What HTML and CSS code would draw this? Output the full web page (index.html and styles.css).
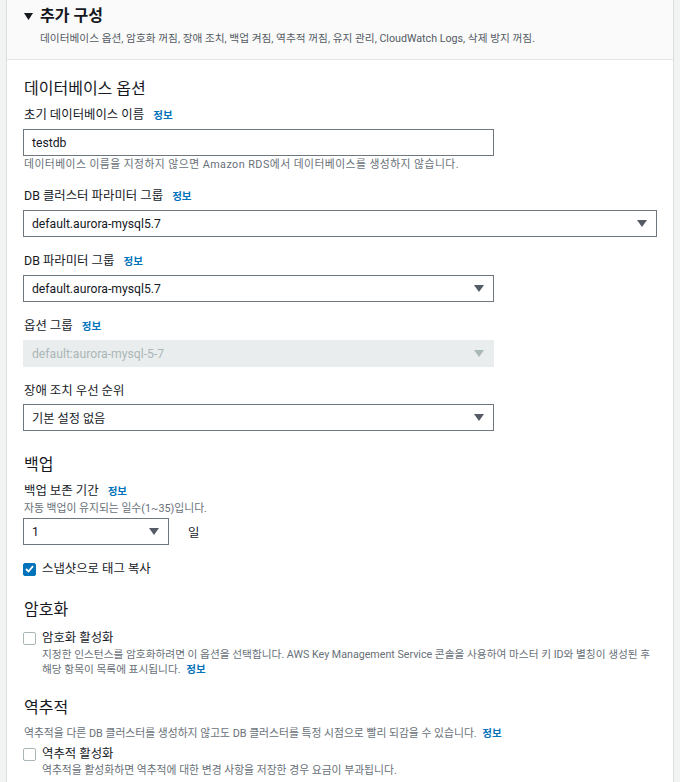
FILE: index.html
```html
<!DOCTYPE html>
<html lang="ko">
<head>
<meta charset="utf-8">
<title>추가 구성</title>
<link rel="stylesheet" href="styles.css">
</head>
<body>
<div class="panel">
  <div class="panel-header">
    <div class="title-row">
      <svg class="caret-down" width="9" height="7" viewBox="0 0 9 7"><path d="M0 0h9L4.5 7z" fill="#16191f"/></svg>
      <span class="title">추가 구성</span>
    </div>
    <div class="summary">데이터베이스 옵션, 암호화 꺼짐, 장애 조치, 백업 켜짐, 역추적 꺼짐, 유지 관리, CloudWatch Logs, 삭제 방지 꺼짐.</div>
  </div>
  <div class="panel-body">
    <h3 class="section-title first">데이터베이스 옵션</h3>

    <div class="field">
      <div class="label">초기 데이터베이스 이름 <a class="info">정보</a></div>
      <div class="control input">testdb</div>
      <div class="hint wide-hint">데이터베이스 이름을 지정하지 않으면 Amazon RDS에서 데이터베이스를 생성하지 않습니다.</div>
    </div>

    <div class="field">
      <div class="label">DB 클러스터 파라미터 그룹 <a class="info">정보</a></div>
      <div class="control select wide"><span>default.aurora-mysql5.7</span><svg class="arrow" width="10" height="7" viewBox="0 0 10 7"><path d="M0 0h10L5 7z"/></svg></div>
    </div>

    <div class="field">
      <div class="label">DB 파라미터 그룹 <a class="info">정보</a></div>
      <div class="control select"><span>default.aurora-mysql5.7</span><svg class="arrow" width="10" height="7" viewBox="0 0 10 7"><path d="M0 0h10L5 7z"/></svg></div>
    </div>

    <div class="field">
      <div class="label">옵션 그룹 <a class="info">정보</a></div>
      <div class="control select disabled"><span>default:aurora-mysql-5-7</span><svg class="arrow" width="10" height="7" viewBox="0 0 10 7"><path d="M0 0h10L5 7z"/></svg></div>
    </div>

    <div class="field">
      <div class="label">장애 조치 우선 순위</div>
      <div class="control select"><span>기본 설정 없음</span><svg class="arrow" width="10" height="7" viewBox="0 0 10 7"><path d="M0 0h10L5 7z"/></svg></div>
    </div>

    <h3 class="section-title backup">백업</h3>
    <div class="field">
      <div class="label">백업 보존 기간 <a class="info">정보</a></div>
      <div class="hint tight">자동 백업이 유지되는 일수(1~35)입니다.</div>
      <div class="retention">
        <div class="control select small"><span>1</span><svg class="arrow" width="10" height="7" viewBox="0 0 10 7"><path d="M0 0h10L5 7z"/></svg></div>
        <span class="unit">일</span>
      </div>
    </div>
    <div class="check-row copy-tags">
      <span class="box checked"><svg width="9" height="8" viewBox="0 0 9 8"><path d="M1 4l2.5 2.5L8 1.2" fill="none" stroke="#fff" stroke-width="1.8"/></svg></span>
      <span class="check-label">스냅샷으로 태그 복사</span>
    </div>

    <h3 class="section-title encryption">암호화</h3>
    <div class="check-row enc-row">
      <span class="box"></span>
      <span class="check-label">암호화 활성화</span>
    </div>
    <div class="check-hint enc-hint">지정한 인스턴스를 암호화하려면 이 옵션을 선택합니다. AWS Key Management Service 콘솔을 사용하여 마스터 키 ID와 별칭이 생성된 후<br>해당 항목이 목록에 표시됩니다. <a class="info">정보</a></div>

    <h3 class="section-title">역추적</h3>
    <div class="hint section-hint">역추적을 다른 DB 클러스터를 생성하지 않고도 DB 클러스터를 특정 시점으로 빨리 되감을 수 있습니다. <a class="info">정보</a></div>
    <div class="check-row bt-row">
      <span class="box"></span>
      <span class="check-label">역추적 활성화</span>
    </div>
    <div class="check-hint">역추적을 활성화하면 역추적에 대한 변경 사항을 저장한 경우 요금이 부과됩니다.</div>
  </div>
</div>
</body>
</html>
```

FILE: styles.css
```css
* { box-sizing: border-box; }
html, body { margin: 0; padding: 0; }
body {
  background: #f2f3f3;
  font-family: "Roboto", "Noto Sans CJK KR", sans-serif;
  color: #16191f;
  height: 782px;
  overflow: hidden;
}
.panel {
  margin-left: 6px;
  width: 668px;
  border-left: 1px solid #dcdfe0;
  border-right: 1px solid #dcdfe0;
  background: #fff;
  min-height: 782px;
}
.panel-header {
  background: #fafafa;
  border-bottom: 1px solid #e4e7e8;
  padding: 5px 20px 18px 17px;
  height: 60px;
}
.title-row {
  display: flex;
  align-items: center;
  height: 22px;
  gap: 7px;
}
.caret-down { margin-top: 1px; }
.title {
  font-size: 16px;
  font-weight: 700;
  line-height: 22px;
}
.summary {
  margin-top: 5px;
  margin-left: 16px;
  font-size: 10.7px;
  line-height: 14px;
  color: #545b64;
  white-space: nowrap;
}
.panel-body {
  padding: 0 16px;
}
.section-title {
  margin: 21px 0 7px 1px;
  font-size: 16px;
  font-weight: 400;
  line-height: 20px;
}
.section-title.first { margin-top: 19px; }
.section-title.backup { margin-top: 24px; }
.section-title.encryption { margin-top: 22px; }
.field { margin-bottom: 15px; }
.label {
  font-size: 12.4px;
  line-height: 18px;
  margin-left: 1px;
}
.info {
  color: #0073bb;
  font-weight: 700;
  font-size: 10.5px;
  margin-left: 6px;
  text-decoration: none;
}
.control {
  margin-top: 4px;
  height: 27px;
  border: 1px solid #6f777e;
  display: flex;
  align-items: center;
  padding: 0 8px;
  font-size: 12.2px;
  width: 471px;
  background: #fff;
}
.control.wide { width: 634px; }
.select { justify-content: space-between; padding-right: 9px; }
.arrow { fill: #545b64; }
.select.disabled {
  background: #eaeded;
  border-color: #eaeded;
  color: #aab7b8;
}
.select.disabled .arrow { fill: #aab7b8; }
.hint {
  font-size: 10.8px;
  line-height: 14px;
  color: #687078;
  margin-top: 2px;
  margin-left: 1px;
  white-space: nowrap;
}
.hint.wide-hint { letter-spacing: 0.45px; }
.hint .info { font-size: 10.5px; margin-left: 3px; letter-spacing: 0; }
.hint.tight { margin-top: 1px; }
.retention {
  display: flex;
  align-items: center;
  gap: 19px;
  margin-top: 2px;
}
.control.small { width: 146px; margin-top: 0; }
.unit { font-size: 12.4px; }
.check-row {
  display: flex;
  align-items: center;
  gap: 6px;
  height: 18px;
  font-size: 12.4px;
}
.copy-tags { margin-top: 1px; }
.enc-row { margin-top: 9px; }
.box {
  width: 13px;
  height: 13px;
  border: 1px solid #aab7b8;
  border-radius: 2px;
  background: #fff;
  display: inline-flex;
  align-items: center;
  justify-content: center;
  flex: none;
}
.box.checked {
  background: #0073bb;
  border-color: #0073bb;
}
.check-label { line-height: 18px; }
.check-hint {
  padding-left: 19px;
  font-size: 10.8px;
  line-height: 15px;
  color: #687078;
  white-space: nowrap;
}
.check-hint.enc-hint { font-size: 10.7px; }
.check-hint .info { font-size: 10.5px; margin-left: 3px; }
.section-hint { margin-top: 9px; }
.bt-row { margin-top: 4px; }
```
